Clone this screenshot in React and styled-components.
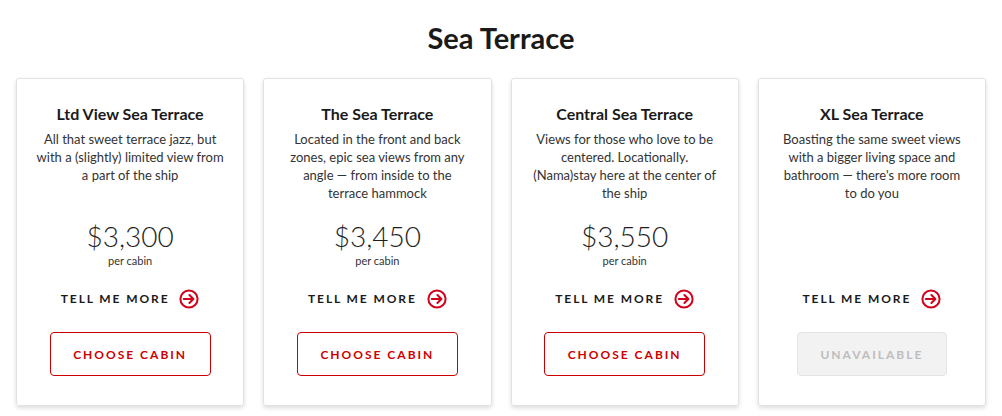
import React from "react";
import styled, { createGlobalStyle } from "styled-components";

const GlobalStyle = createGlobalStyle`
  body {
    margin: 0;
    background: #fff;
    font-family: "Lato", "Noto Sans", sans-serif;
    color: #1e1e1e;
  }
`;

const cabins = [
  {
    name: "Ltd View Sea Terrace",
    text: "All that sweet terrace jazz, but with a (slightly) limited view from a part of the ship",
    price: "$3,300",
  },
  {
    name: "The Sea Terrace",
    text: "Located in the front and back zones, epic sea views from any angle — from inside to the terrace hammock",
    price: "$3,450",
  },
  {
    name: "Central Sea Terrace",
    text: "Views for those who love to be centered. Locationally. (Nama)stay here at the center of the ship",
    price: "$3,550",
  },
  {
    name: "XL Sea Terrace",
    text: "Boasting the same sweet views with a bigger living space and bathroom — there's more room to do you",
    price: null,
  },
];

export default function App() {
  return (
    <Page>
      <GlobalStyle />
      <Heading>Sea Terrace</Heading>
      <Grid>
        {cabins.map((c) => (
          <Card key={c.name}>
            <Name>{c.name}</Name>
            <Desc>{c.text}</Desc>
            <PriceBox>
              {c.price && (
                <>
                  <Price>{c.price}</Price>
                  <Per>per cabin</Per>
                </>
              )}
            </PriceBox>
            <More>
              TELL ME MORE
              <svg width="20" height="20" viewBox="0 0 20 20" fill="none" stroke="#d0021b" strokeWidth="2">
                <circle cx="10" cy="10" r="8.6" />
                <path d="M4.8 10h9.4M10.4 6l4 4-4 4" strokeLinecap="round" strokeLinejoin="round" />
              </svg>
            </More>
            <Choose disabled={!c.price}>{c.price ? "CHOOSE CABIN" : "UNAVAILABLE"}</Choose>
          </Card>
        ))}
      </Grid>
    </Page>
  );
}

const Page = styled.div`
  padding: 20px 16px 10px 16px;
  width: 970px;
`;

const Heading = styled.h1`
  margin: 0 0 22px;
  text-align: center;
  font-size: 29px;
  line-height: 36px;
  font-weight: 700;
  color: #1a1a1a;
`;

const Grid = styled.div`
  display: grid;
  grid-template-columns: repeat(4, 1fr);
  gap: 19px;
`;

const Card = styled.div`
  display: flex;
  flex-direction: column;
  align-items: center;
  padding: 25px 14px 29px;
  border: 1px solid #e2e2e2;
  border-radius: 3px;
  box-shadow: 0 2px 4px rgba(0, 0, 0, 0.14);
  text-align: center;
`;

const Name = styled.h2`
  margin: 0 0 6px;
  font-size: 16px;
  line-height: 20px;
  font-weight: 700;
  color: #1a1a1a;
`;

const Desc = styled.p`
  margin: 0;
  width: 188px;
  min-height: 72px;
  font-size: 13px;
  line-height: 18px;
  color: #333;
`;

const PriceBox = styled.div`
  height: 50px;
  margin-top: 17px;
  display: flex;
  flex-direction: column;
  align-items: center;
`;

const Price = styled.div`
  font-size: 28px;
  line-height: 34px;
  font-weight: 300;
  color: #1e1e1e;
`;

const Per = styled.div`
  margin-top: 1px;
  font-size: 11px;
  line-height: 14px;
  color: #333;
`;

const More = styled.div`
  margin-top: 20px;
  display: flex;
  align-items: center;
  gap: 10px;
  font-size: 12px;
  line-height: 20px;
  font-weight: 700;
  letter-spacing: 1.9px;
  color: #1a1a1a;
`;

const Choose = styled.button`
  margin-top: 23px;
  width: ${(p) => (p.disabled ? "150px" : "161px")};
  height: 44px;
  border-radius: 4px;
  border: 1px solid ${(p) => (p.disabled ? "#e4e4e4" : "#cc0000")};
  background: ${(p) => (p.disabled ? "#f2f2f2" : "#fff")};
  color: ${(p) => (p.disabled ? "#bdbdbd" : "#cc0000")};
  font-family: inherit;
  font-size: 12px;
  font-weight: 700;
  letter-spacing: 2px;
  cursor: ${(p) => (p.disabled ? "default" : "pointer")};
`;
